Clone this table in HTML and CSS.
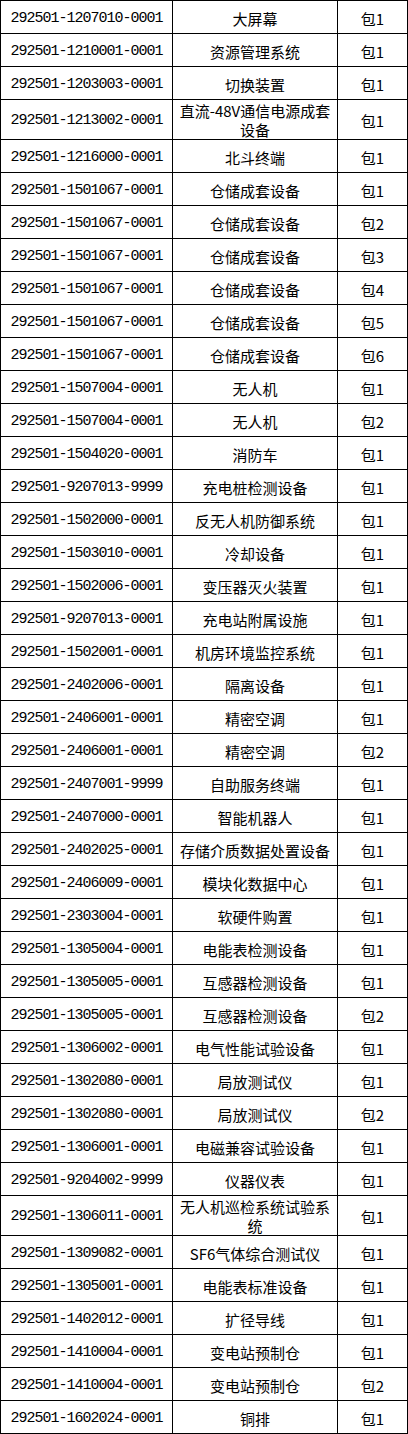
FILE: index.html
```html
<!DOCTYPE html>
<html lang="zh-CN">
<head>
<meta charset="utf-8">
<title>包件清单</title>
<link rel="stylesheet" href="styles.css">
</head>
<body>
<table class="list">
<colgroup><col class="c-code"><col class="c-name"><col class="c-pkg"></colgroup>
<tbody>
<tr><td class="code">292501-1207010-0001</td><td>大屏幕</td><td>包1</td></tr>
<tr><td class="code">292501-1210001-0001</td><td>资源管理系统</td><td>包1</td></tr>
<tr><td class="code">292501-1203003-0001</td><td>切换装置</td><td>包1</td></tr>
<tr class="tall"><td class="code">292501-1213002-0001</td><td>直流-48V通信电源成套设备</td><td>包1</td></tr>
<tr><td class="code">292501-1216000-0001</td><td>北斗终端</td><td>包1</td></tr>
<tr><td class="code">292501-1501067-0001</td><td>仓储成套设备</td><td>包1</td></tr>
<tr><td class="code">292501-1501067-0001</td><td>仓储成套设备</td><td>包2</td></tr>
<tr><td class="code">292501-1501067-0001</td><td>仓储成套设备</td><td>包3</td></tr>
<tr><td class="code">292501-1501067-0001</td><td>仓储成套设备</td><td>包4</td></tr>
<tr><td class="code">292501-1501067-0001</td><td>仓储成套设备</td><td>包5</td></tr>
<tr><td class="code">292501-1501067-0001</td><td>仓储成套设备</td><td>包6</td></tr>
<tr><td class="code">292501-1507004-0001</td><td>无人机</td><td>包1</td></tr>
<tr><td class="code">292501-1507004-0001</td><td>无人机</td><td>包2</td></tr>
<tr><td class="code">292501-1504020-0001</td><td>消防车</td><td>包1</td></tr>
<tr><td class="code">292501-9207013-9999</td><td>充电桩检测设备</td><td>包1</td></tr>
<tr><td class="code">292501-1502000-0001</td><td>反无人机防御系统</td><td>包1</td></tr>
<tr><td class="code">292501-1503010-0001</td><td>冷却设备</td><td>包1</td></tr>
<tr><td class="code">292501-1502006-0001</td><td>变压器灭火装置</td><td>包1</td></tr>
<tr><td class="code">292501-9207013-0001</td><td>充电站附属设施</td><td>包1</td></tr>
<tr><td class="code">292501-1502001-0001</td><td>机房环境监控系统</td><td>包1</td></tr>
<tr><td class="code">292501-2402006-0001</td><td>隔离设备</td><td>包1</td></tr>
<tr><td class="code">292501-2406001-0001</td><td>精密空调</td><td>包1</td></tr>
<tr><td class="code">292501-2406001-0001</td><td>精密空调</td><td>包2</td></tr>
<tr><td class="code">292501-2407001-9999</td><td>自助服务终端</td><td>包1</td></tr>
<tr><td class="code">292501-2407000-0001</td><td>智能机器人</td><td>包1</td></tr>
<tr><td class="code">292501-2402025-0001</td><td>存储介质数据处置设备</td><td>包1</td></tr>
<tr><td class="code">292501-2406009-0001</td><td>模块化数据中心</td><td>包1</td></tr>
<tr><td class="code">292501-2303004-0001</td><td>软硬件购置</td><td>包1</td></tr>
<tr><td class="code">292501-1305004-0001</td><td>电能表检测设备</td><td>包1</td></tr>
<tr><td class="code">292501-1305005-0001</td><td>互感器检测设备</td><td>包1</td></tr>
<tr><td class="code">292501-1305005-0001</td><td>互感器检测设备</td><td>包2</td></tr>
<tr><td class="code">292501-1306002-0001</td><td>电气性能试验设备</td><td>包1</td></tr>
<tr><td class="code">292501-1302080-0001</td><td>局放测试仪</td><td>包1</td></tr>
<tr><td class="code">292501-1302080-0001</td><td>局放测试仪</td><td>包2</td></tr>
<tr><td class="code">292501-1306001-0001</td><td>电磁兼容试验设备</td><td>包1</td></tr>
<tr><td class="code">292501-9204002-9999</td><td>仪器仪表</td><td>包1</td></tr>
<tr class="tall"><td class="code">292501-1306011-0001</td><td>无人机巡检系统试验系统</td><td>包1</td></tr>
<tr><td class="code">292501-1309082-0001</td><td>SF6气体综合测试仪</td><td>包1</td></tr>
<tr><td class="code">292501-1305001-0001</td><td>电能表标准设备</td><td>包1</td></tr>
<tr><td class="code">292501-1402012-0001</td><td>扩径导线</td><td>包1</td></tr>
<tr><td class="code">292501-1410004-0001</td><td>变电站预制仓</td><td>包1</td></tr>
<tr><td class="code">292501-1410004-0001</td><td>变电站预制仓</td><td>包2</td></tr>
<tr><td class="code">292501-1602024-0001</td><td>铜排</td><td>包1</td></tr>
</tbody>
</table>
</body>
</html>
```

FILE: styles.css
```css
html, body {
  margin: 0;
  padding: 0;
  background: #ffffff;
}

.list {
  border-collapse: collapse;
  table-layout: fixed;
  width: 407px;
  font-family: "Noto Sans CJK SC", "Noto Sans", sans-serif;
  font-size: 15px;
  line-height: 19px;
  color: #000000;
}

.c-code { width: 172px; }
.c-name { width: 165px; }
.c-pkg { width: 70px; }

.list td {
  border: 1px solid #000000;
  height: 33px;
  padding: 2px 1px 0;
  text-align: center;
  vertical-align: middle;
  box-sizing: border-box;
}

.list tr.tall td {
  height: 40px;
  padding: 1px 1px 0;
}

.list td.code {
  font-family: "Liberation Mono", "DejaVu Sans Mono", monospace;
  font-size: 15px;
  letter-spacing: -1px;
  white-space: nowrap;
}
```
